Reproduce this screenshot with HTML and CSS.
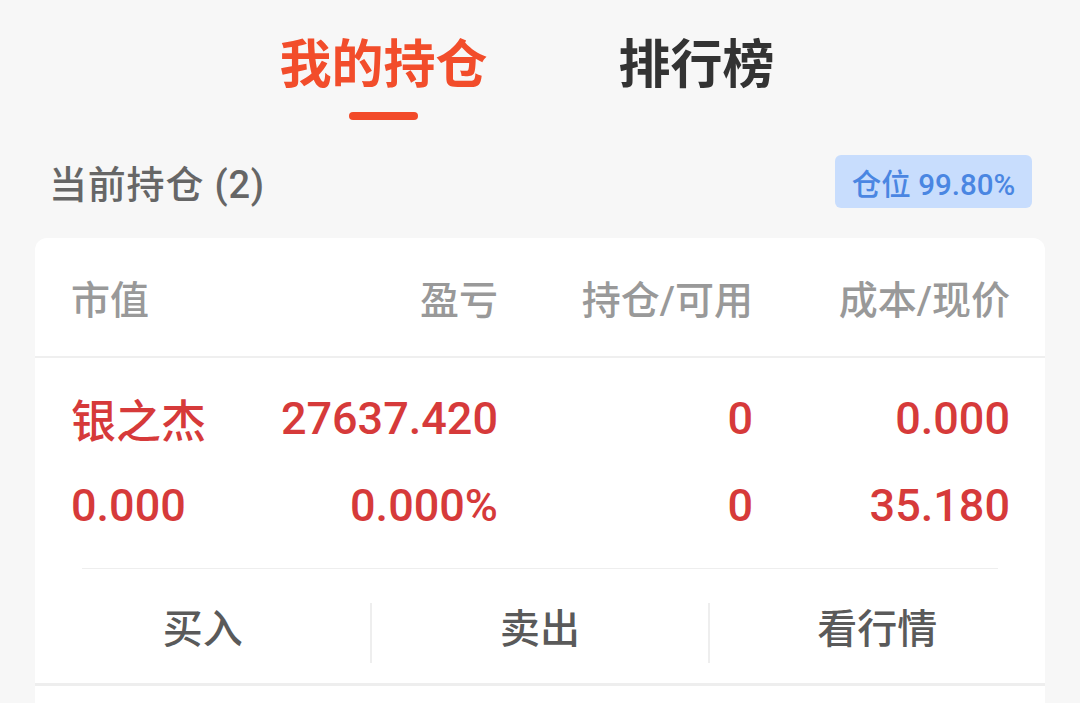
FILE: index.html
```html
<!DOCTYPE html>
<html lang="zh-CN">
<head>
<meta charset="utf-8">
<title>我的持仓</title>
<link rel="stylesheet" href="styles.css">
</head>
<body>
<div class="tabs">
  <div class="tab active">
    <span class="tab-text">我的持仓</span>
    <span class="tab-line"></span>
  </div>
  <div class="tab">
    <span class="tab-text">排行榜</span>
  </div>
</div>

<div class="summary">
  <div class="summary-title">当前持仓 (2)</div>
  <div class="badge">仓位 99.80%</div>
</div>

<div class="card">
  <div class="grid head">
    <div class="c1">市值</div>
    <div class="c2">盈亏</div>
    <div class="c3">持仓/可用</div>
    <div class="c4">成本/现价</div>
  </div>
  <div class="item">
    <div class="rows">
      <div class="grid row">
        <div class="c1 name">银之杰</div>
        <div class="c2">27637.420</div>
        <div class="c3">0</div>
        <div class="c4">0.000</div>
      </div>
      <div class="grid row">
        <div class="c1">0.000</div>
        <div class="c2">0.000%</div>
        <div class="c3">0</div>
        <div class="c4">35.180</div>
      </div>
    </div>
    <div class="divider"></div>
    <div class="actions">
      <div class="action">买入</div>
      <div class="action sep">卖出</div>
      <div class="action sep">看行情</div>
    </div>
  </div>
  <div class="item-next"></div>
</div>
</body>
</html>
```

FILE: styles.css
```css
* { box-sizing: border-box; }
html, body {
  margin: 0;
  padding: 0;
  background: #f7f7f7;
  font-family: Roboto, "Noto Sans CJK SC", sans-serif;
}
body { overflow: hidden; height: 703px; }

.tabs {
  display: flex;
  justify-content: center;
  padding-top: 40px;
}
.tab {
  width: 313px;
  display: flex;
  flex-direction: column;
  align-items: center;
  height: 80px;
}
.tab-text {
  font-size: 52px;
  line-height: 52px;
  font-weight: 700;
  color: #333333;
}
.tab.active .tab-text { color: #f24d2b; }
.tab-line {
  width: 69px;
  height: 8px;
  border-radius: 4px;
  background: #f24a29;
  margin-top: 20px;
}

.summary {
  margin-top: 35px;
  height: 53px;
  padding: 0 48px 0 49px;
  display: flex;
  align-items: center;
  justify-content: space-between;
}
.summary-title {
  font-size: 38px;
  color: #666666;
  font-weight: 500;
  letter-spacing: 0.8px;
}
.badge {
  height: 53px;
  width: 197px;
  border-radius: 6px;
  background: #c8ddfd;
  color: #4a86e2;
  font-size: 29.5px;
  font-weight: 500;
  display: flex;
  align-items: center;
  justify-content: center;
}

.card {
  margin: 30px 35px 0;
  background: #ffffff;
  border-radius: 12px 12px 0 0;
}
.grid {
  display: grid;
  grid-template-columns: 200px 227px 255px 257px;
  padding: 0 35px 0 36px;
  align-items: center;
}
.c1 { text-align: left; }
.c2, .c3, .c4 { text-align: right; }
.head {
  height: 120px;
  border-bottom: 2px solid #efefef;
  font-size: 39px;
  color: #999999;
  font-weight: 500;
}
.rows { padding-top: 17px; }
.row {
  height: 87px;
  font-size: 45px;
  color: #d63a3a;
  font-weight: 500;
}
.divider {
  margin: 19px 47px 0;
  height: 1px;
  background: #eeeeee;
}
.actions {
  display: flex;
  padding: 34px 0 20px;
  border-bottom: 3px solid #eeeeee;
}
.action {
  flex: 1;
  height: 60px;
  padding-bottom: 14px;
  display: flex;
  align-items: center;
  justify-content: center;
  font-size: 40px;
  font-weight: 500;
  color: #5a5a5a;
}
.action.sep { border-left: 2px solid #eeeeee; }
.item-next { height: 40px; }
```
